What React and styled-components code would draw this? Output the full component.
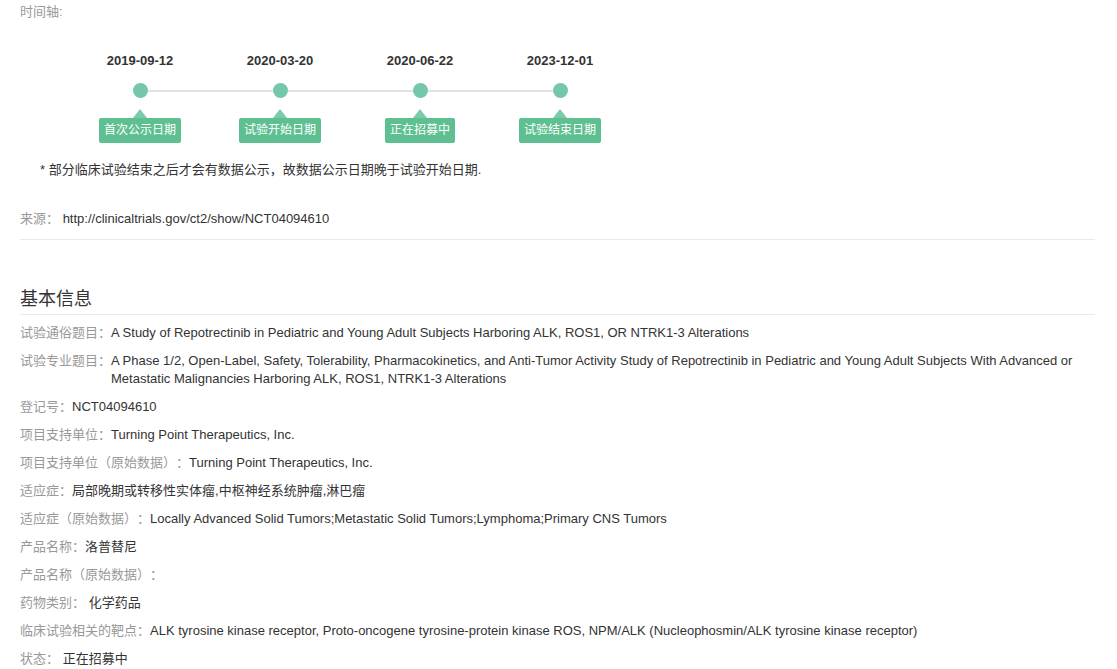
import React from "react";
import styled, { createGlobalStyle } from "styled-components";

const Global = createGlobalStyle`
  html, body { margin: 0; padding: 0; background: #fff; }
  body { font-family: "Liberation Sans", Arial, "Noto Sans CJK SC", sans-serif; color: #333; }
`;

const Page = styled.div`
  padding: 3px 22px 0 20px;
  font-size: 13px;
  line-height: 18px;
`;

const Caption = styled.div`
  color: #999;
`;

const Timeline = styled.div`
  display: flex;
  margin: 31px 0 0 50px;
`;

const Step = styled.div`
  width: 140px;
  display: flex;
  flex-direction: column;
  align-items: center;
`;

const DateText = styled.div`
  font-weight: bold;
  font-size: 13px;
  color: #333;
`;

const Track = styled.div`
  align-self: stretch;
  display: flex;
  align-items: center;
  margin-top: 13px;
  height: 15px;
`;

const Half = styled.div`
  flex: 1;
  height: 2px;
  background: ${(p) => (p.$hidden ? "transparent" : "#e3e3e3")};
`;

const Dot = styled.div`
  width: 15px;
  height: 15px;
  border-radius: 50%;
  background: #75c7aa;
  flex-shrink: 0;
`;

const Arrow = styled.div`
  margin-top: 11px;
  width: 0;
  height: 0;
  border-left: 7px solid transparent;
  border-right: 7px solid transparent;
  border-bottom: 9px solid #7acba9;
`;

const Tag = styled.div`
  background: #5ebf91;
  color: #fff;
  font-size: 12px;
  height: 25px;
  line-height: 25px;
  padding: 0 5px;
  border-radius: 2px;
  white-space: nowrap;
`;

const Note = styled.div`
  margin: 18px 0 0 20px;
  color: #333;
`;

const Source = styled.div`
  margin-top: 31px;
  padding-bottom: 11px;
  border-bottom: 1px solid #eaeaea;
  display: flex;
`;

const Label = styled.span`
  color: #999;
  flex-shrink: 0;
`;

const Colon = styled.span`
  display: inline-block;
`;

const Value = styled.span`
  color: #333;
`;

const Heading = styled.h2`
  margin: 47px 0 0;
  font-size: 18px;
  font-weight: normal;
  line-height: 24px;
  padding-bottom: 3px;
  border-bottom: 1px solid #eaeaea;
  color: #333;
`;

const Rows = styled.div`
  display: flex;
  flex-direction: column;
  gap: 10px;
  padding-top: 9px;
`;

const Row = styled.div`
  display: flex;
`;

const steps = [
  { date: "2019-09-12", tag: "首次公示日期" },
  { date: "2020-03-20", tag: "试验开始日期" },
  { date: "2020-06-22", tag: "正在招募中" },
  { date: "2023-12-01", tag: "试验结束日期" },
];

const rows = [
  ["试验通俗题目", "A Study of Repotrectinib in Pediatric and Young Adult Subjects Harboring ALK, ROS1, OR NTRK1-3 Alterations"],
  ["试验专业题目", "A Phase 1/2, Open-Label, Safety, Tolerability, Pharmacokinetics, and Anti-Tumor Activity Study of Repotrectinib in Pediatric and Young Adult Subjects With Advanced or Metastatic Malignancies Harboring ALK, ROS1, NTRK1-3 Alterations"],
  ["登记号", "NCT04094610"],
  ["项目支持单位", "Turning Point Therapeutics, Inc."],
  ["项目支持单位（原始数据）", "Turning Point Therapeutics, Inc."],
  ["适应症", "局部晚期或转移性实体瘤,中枢神经系统肿瘤,淋巴瘤"],
  ["适应症（原始数据）", "Locally Advanced Solid Tumors;Metastatic Solid Tumors;Lymphoma;Primary CNS Tumors"],
  ["产品名称", "洛普替尼"],
  ["产品名称（原始数据）", ""],
  ["药物类别", "\u00a0化学药品"],
  ["临床试验相关的靶点", "ALK tyrosine kinase receptor, Proto-oncogene tyrosine-protein kinase ROS, NPM/ALK (Nucleophosmin/ALK tyrosine kinase receptor)"],
  ["状态", "\u00a0正在招募中"],
];

export default function App() {
  return (
    <Page>
      <Global />
      <Caption>时间轴:</Caption>
      <Timeline>
        {steps.map((s, i) => (
          <Step key={s.date}>
            <DateText>{s.date}</DateText>
            <Track>
              <Half $hidden={i === 0} />
              <Dot />
              <Half $hidden={i === steps.length - 1} />
            </Track>
            <Arrow />
            <Tag>{s.tag}</Tag>
          </Step>
        ))}
      </Timeline>
      <Note>* 部分临床试验结束之后才会有数据公示，故数据公示日期晚于试验开始日期.</Note>
      <Source>
        <Label>来源：</Label>
        <Value>&nbsp;http://clinicaltrials.gov/ct2/show/NCT04094610</Value>
      </Source>
      <Heading>基本信息</Heading>
      <Rows>
        {rows.map(([l, v]) => (
          <Row key={l}>
            <Label>
              {l}
              <Colon>：</Colon>
            </Label>
            <Value>{v}</Value>
          </Row>
        ))}
      </Rows>
    </Page>
  );
}
